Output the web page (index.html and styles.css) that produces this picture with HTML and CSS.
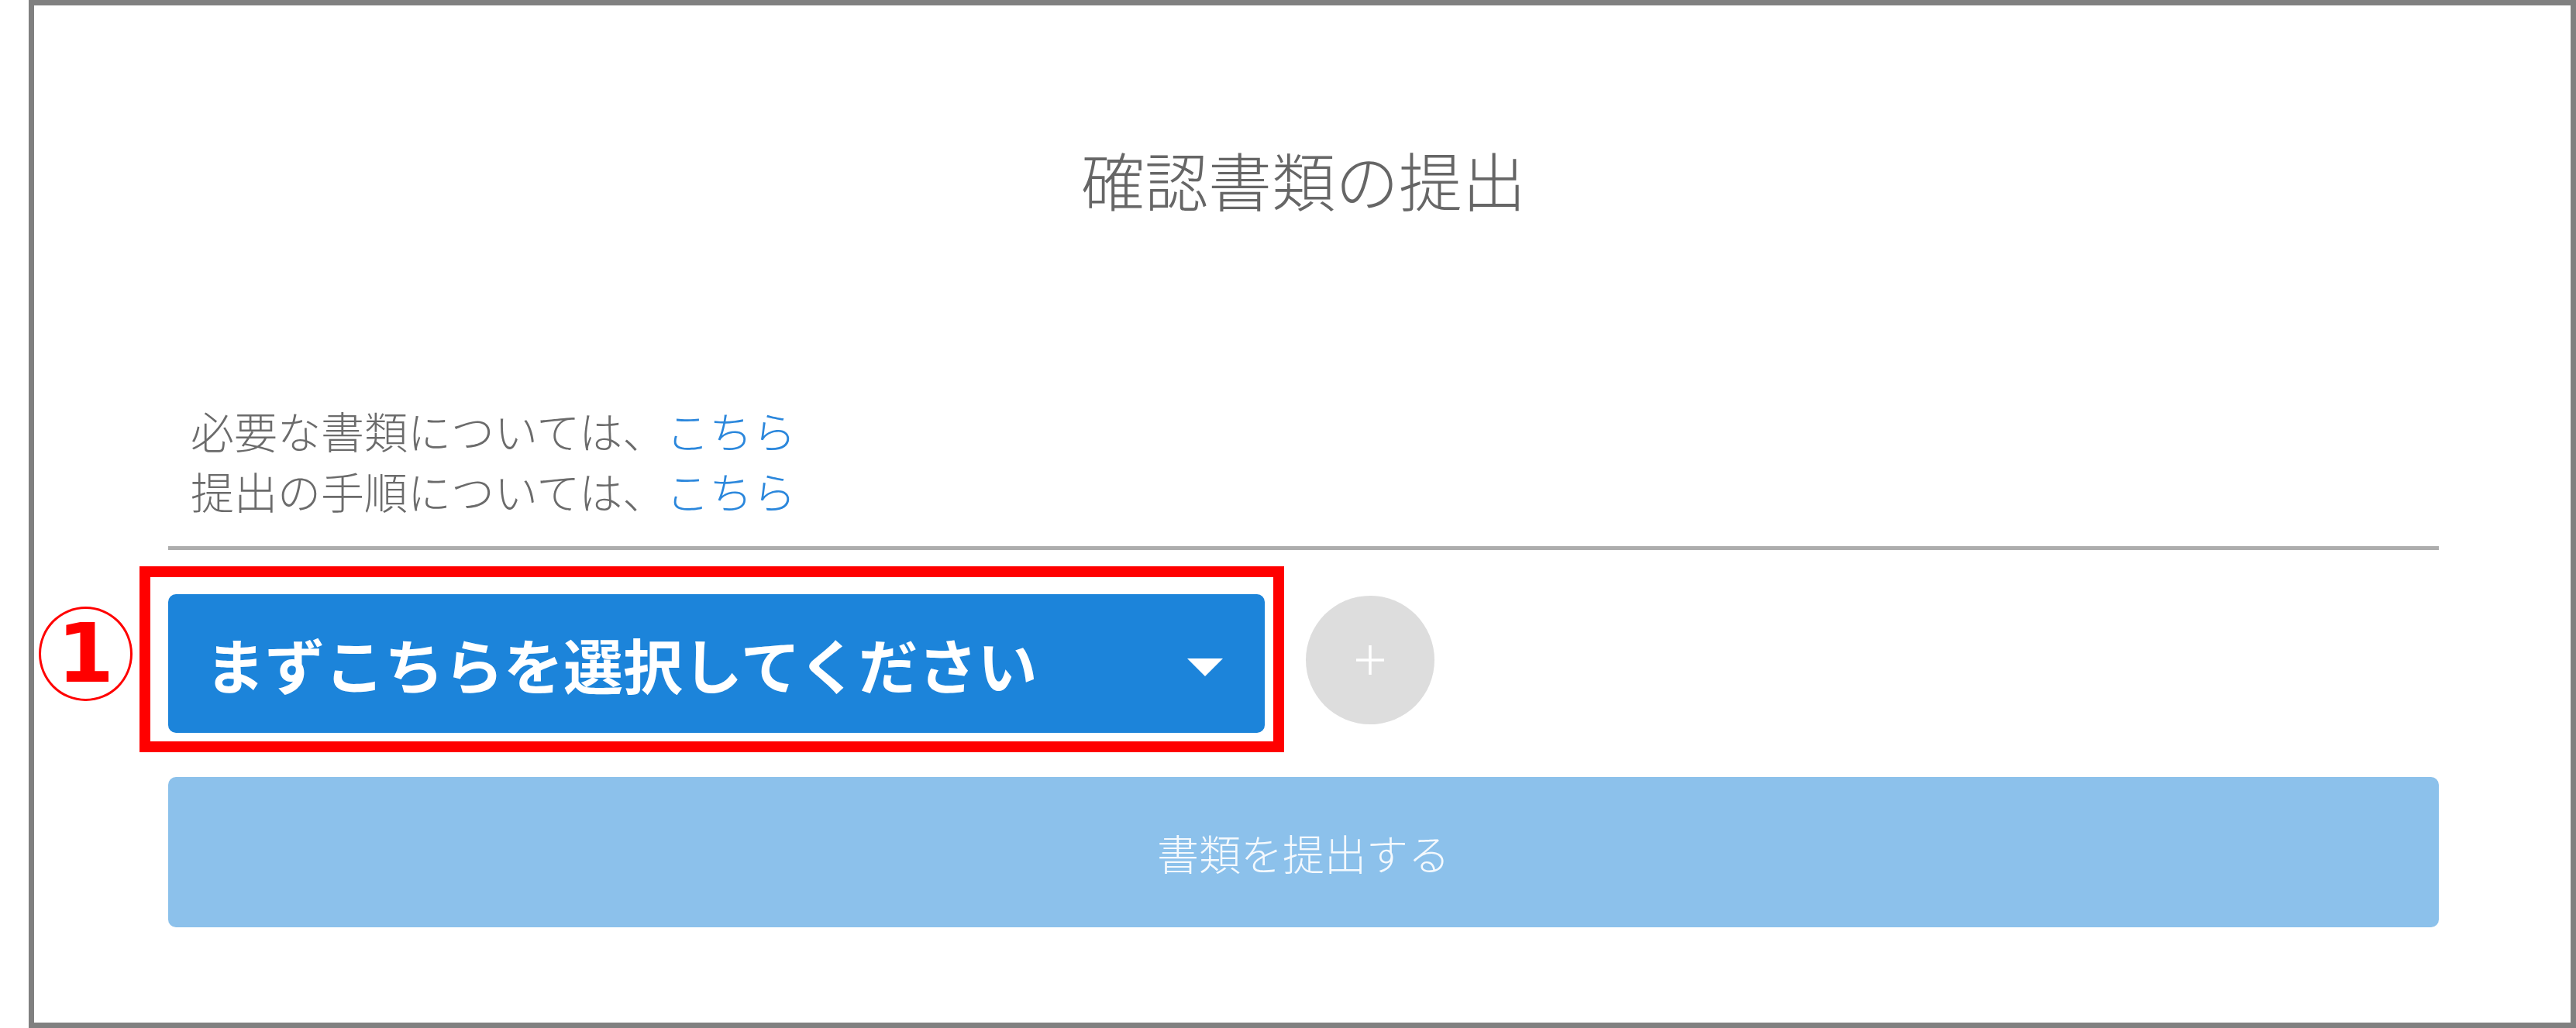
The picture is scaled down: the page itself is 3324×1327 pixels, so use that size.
FILE: index.html
```html
<!DOCTYPE html>
<html lang="ja">
<head>
<meta charset="utf-8">
<title>確認書類の提出</title>
<link rel="stylesheet" href="styles.css">
</head>
<body>
<div class="panel">
  <h1 class="title">確認書類の提出</h1>
  <div class="info">
    <p class="info-line">必要な書類については、<a class="link" href="#">こちら</a></p>
    <p class="info-line">提出の手順については、<a class="link" href="#">こちら</a></p>
  </div>
  <div class="divider"></div>
  <div class="select-row">
    <div class="select">
      <span class="select-label">まずこちらを選択してください</span>
      <svg class="select-arrow" width="46" height="23" viewBox="0 0 46 23"><polygon points="0,0 46,0 23,23" fill="#ffffff"/></svg>
    </div>
    <div class="add-btn">
      <svg width="36" height="38" viewBox="0 0 36 38"><path d="M18 0 V38 M0 19 H36" stroke="#ffffff" stroke-width="3.5" fill="none"/></svg>
    </div>
    <div class="highlight"></div>
    <div class="step-mark"><span class="step-num">1</span></div>
  </div>
  <div class="submit">書類を提出する</div>
</div>
</body>
</html>
```
FILE: styles.css
```css
html, body {
  margin: 0;
  padding: 0;
  background: #ffffff;
}
body {
  font-family: "Noto Sans CJK JP", "Noto Sans", sans-serif;
  width: 3324px;
  height: 1327px;
  overflow: hidden;
}
.panel {
  margin-left: 37px;
  height: 1327px;
  box-sizing: border-box;
  border: 7px solid #808080;
  padding: 183px 170px 0 173px;
}
.title {
  margin: 0;
  text-align: center;
  font-size: 82px;
  line-height: 81px;
  font-weight: 300;
  color: #666666;
}
.info {
  margin-top: 245px;
  padding-left: 29px;
  font-size: 56px;
  line-height: 78px;
  font-weight: 300;
  color: #6b6b6b;
}
.info-line {
  margin: 0;
}
.link {
  color: #2b87dc;
  text-decoration: none;
}
.divider {
  margin-top: 33px;
  height: 5px;
  background: #adadad;
}
.select-row {
  position: relative;
  margin-top: 57px;
  display: flex;
  align-items: flex-start;
}
.select {
  width: 1415px;
  height: 179px;
  box-sizing: border-box;
  background: #1c84da;
  border-radius: 10px;
  display: flex;
  align-items: center;
  justify-content: space-between;
  padding: 0 54px 0 48px;
}
.select-label {
  color: #ffffff;
  font-size: 77px;
  line-height: 1;
  font-weight: 700;
}
.select-arrow {
  display: block;
  margin-top: 10px;
}
.add-btn {
  width: 166px;
  height: 166px;
  margin-left: 53px;
  margin-top: 2px;
  border-radius: 50%;
  background: #dddddd;
  display: flex;
  align-items: center;
  justify-content: center;
}
.add-btn svg {
  display: block;
}
.highlight {
  position: absolute;
  left: -37px;
  top: -36px;
  width: 1477px;
  height: 240px;
  box-sizing: border-box;
  border: 14px solid #ff0000;
  pointer-events: none;
}
.step-mark {
  position: absolute;
  left: -167px;
  top: 16px;
  width: 121px;
  height: 122px;
  box-sizing: border-box;
  border: 3px solid #ff0000;
  border-radius: 50%;
  display: flex;
  align-items: center;
  justify-content: center;
}
.step-num {
  font-family: "DejaVu Sans", sans-serif;
  font-weight: 700;
  font-size: 106px;
  line-height: 1;
  color: #ff0000;
}
.submit {
  margin-top: 57px;
  height: 194px;
  border-radius: 10px;
  background: #8cc1eb;
  color: #f4f9fd;
  font-size: 54px;
  font-weight: 300;
  display: flex;
  align-items: center;
  justify-content: center;
}
```
